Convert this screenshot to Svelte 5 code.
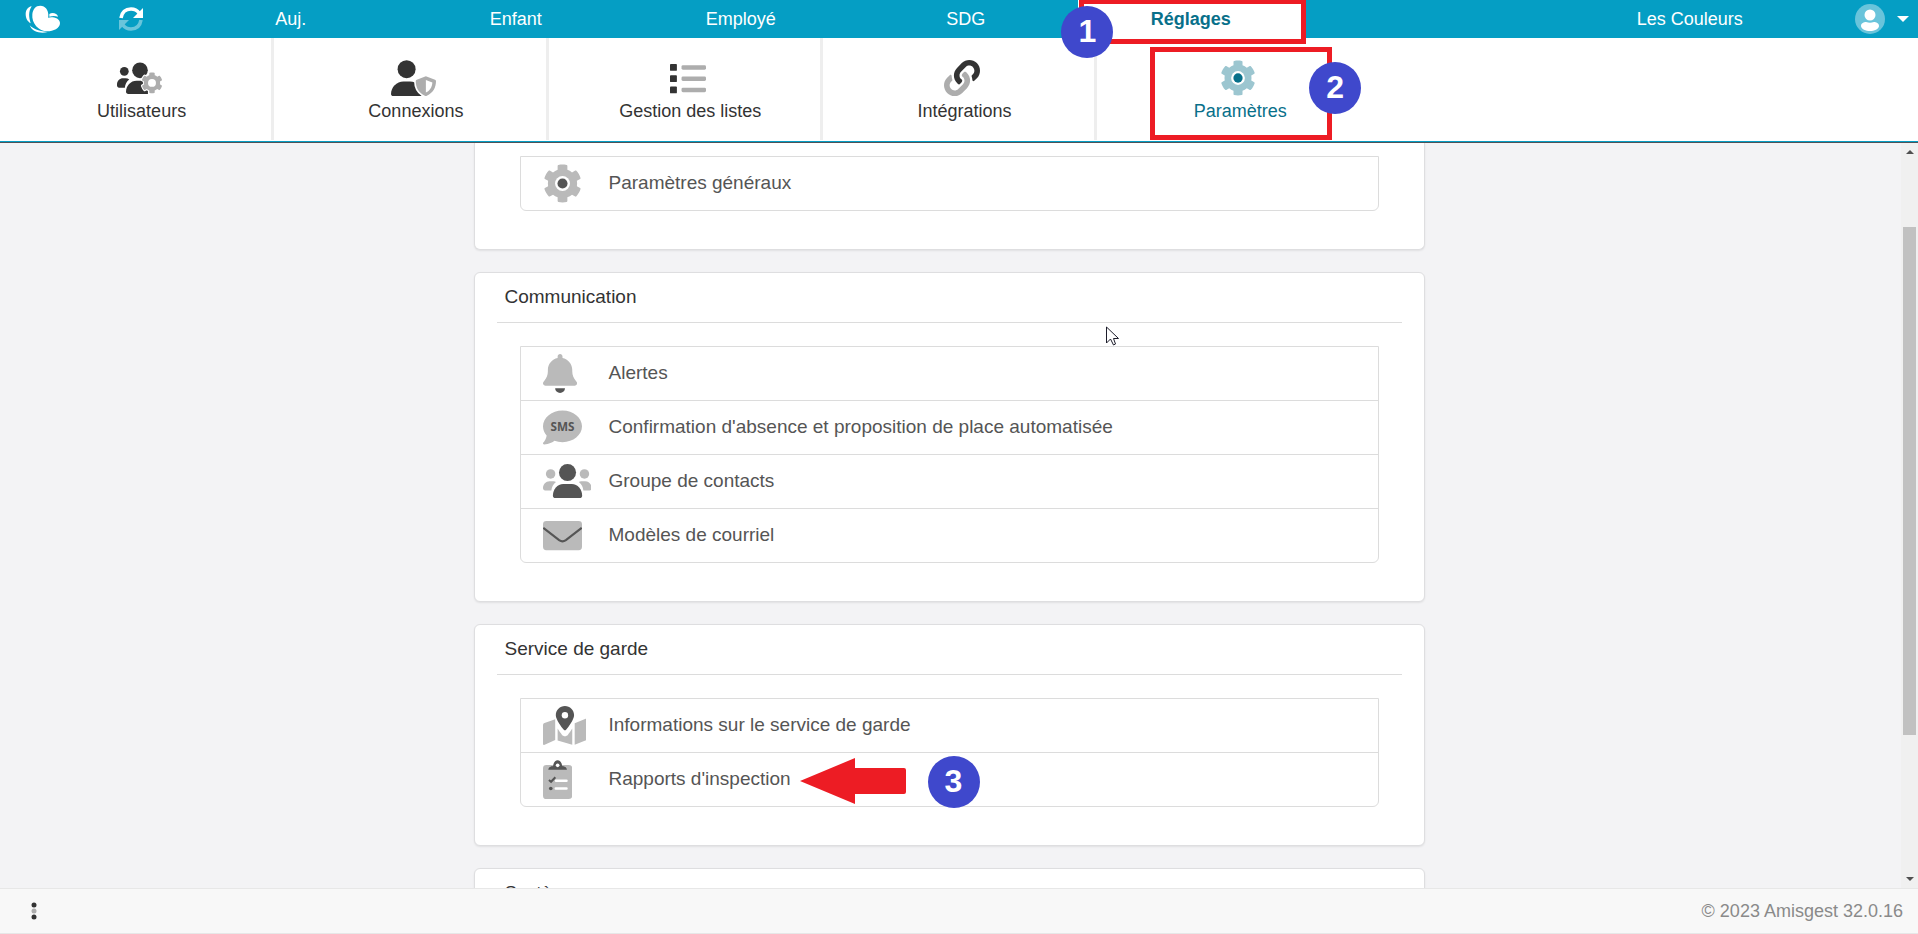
<script>
  const tabs = ["Auj.", "Enfant", "Employé", "SDG", "Réglages"];

  const tools = [
    { label: "Utilisateurs", icon: "usersCog" },
    { label: "Connexions", icon: "userShield" },
    { label: "Gestion des listes", icon: "list" },
    { label: "Intégrations", icon: "link" },
    { label: "Paramètres", icon: "gear" },
  ];

  const sections = [
    { items: [{ label: "Paramètres généraux", icon: "gear" }] },
    {
      title: "Communication",
      pointer: true,
      items: [
        { label: "Alertes", icon: "bell" },
        { label: "Confirmation d'absence et proposition de place automatisée", icon: "sms" },
        { label: "Groupe de contacts", icon: "group" },
        { label: "Modèles de courriel", icon: "envelope" },
      ],
    },
    {
      title: "Service de garde",
      items: [
        { label: "Informations sur le service de garde", icon: "map" },
        { label: "Rapports d'inspection", icon: "clipboard", step: 3 },
      ],
    },
    { title: "Système", items: [] },
  ];

  const widths = {
    usersCog: 640,
    userShield: 640,
    list: 512,
    link: 512,
    gear: 512,
    bell: 448,
    sms: 512,
    group: 640,
    envelope: 512,
    map: 576,
    clipboard: 384,
  };

  const gearPath =
    "M487.4 315.7l-42.6-24.6c4.3-23.2 4.3-47 0-70.2l42.6-24.6c4.9-2.8 7.1-8.6 5.5-14-11.1-35.6-30-67.8-54.7-94.6-3.8-4.1-10-5.1-14.8-2.3L380.8 110c-17.9-15.4-38.5-27.3-60.8-35.1V25.8c0-5.6-3.9-10.5-9.4-11.7-36.7-8.2-74.3-7.8-109.2 0-5.5 1.2-9.4 6.1-9.4 11.7V75c-22.2 7.9-42.8 19.8-60.8 35.1L88.7 85.5c-4.9-2.8-11-1.9-14.8 2.3-24.7 26.7-43.6 58.9-54.7 94.6-1.7 5.4.6 11.2 5.5 14L67.3 221c-4.3 23.2-4.3 47 0 70.2l-42.6 24.6c-4.9 2.8-7.1 8.6-5.5 14 11.1 35.6 30 67.8 54.7 94.6 3.8 4.1 10 5.1 14.8 2.3l42.6-24.6c17.9 15.4 38.5 27.3 60.8 35.1v49.2c0 5.6 3.9 10.5 9.4 11.7 36.7 8.2 74.3 7.8 109.2 0 5.5-1.2 9.4-6.1 9.4-11.7v-49.2c22.2-7.9 42.8-19.8 60.8-35.1l42.6 24.6c4.9 2.8 11 1.9 14.8-2.3 24.7-26.7 43.6-58.9 54.7-94.6 1.5-5.5-.7-11.3-5.6-14.1z";
</script>

<!-- two-tone icons: .dark is the main tone, .soft the light one, .gap cuts a hole -->
{#snippet icon(name)}
  <svg class="icon" viewBox="0 0 {widths[name]} 512" aria-hidden="true">
    {#if name === "usersCog"}
      <circle class="dark" cx="104" cy="161" r="62" />
      <path class="dark" d="M0 364v-16c0-48 38-87 86-87h36c20 0 38 6 52 18-36 26-58 66-62 115H30c-17 0-30-13-30-30z" />
      <circle class="dark" cx="327" cy="147" r="111" />
      <path class="dark" d="M128 452c0-88 66-158 150-158h92c30 0 60 10 70 30v160H160c-18 0-32-14-32-32z" />
      <g transform="translate(344 172) scale(.6)">
        <path class="gap wide" d={gearPath} />
        <path class="soft" d={gearPath} />
        <circle class="gap" cx="256" cy="256" r="94" />
      </g>
    {:else if name === "userShield"}
      <circle class="dark" cx="222" cy="130" r="128" />
      <path class="dark" d="M0 482C0 384 80 304 178 304h92c98 0 178 80 178 178 0 17-13 30-30 30H30c-17 0-30-13-30-30z" />
      <path class="gap wide" d="M496 230l130 50c8 3 14 10 14 20 0 90-40 170-130 208q-14 6-28 0c-90-38-130-118-130-208 0-10 6-17 14-20z" />
      <path class="soft" d="M496 230l130 50c8 3 14 10 14 20 0 90-40 170-130 208q-14 6-28 0c-90-38-130-118-130-208 0-10 6-17 14-20z" />
      <path class="gap" d="M496 284l92 37c-3 60-30 114-92 142z" />
    {:else if name === "list"}
      {#each [56, 216, 376] as y}
        <rect class="dark" x="0" {y} width="98" height="98" rx="12" />
        <rect class="soft" x="164" y={y + 17} width="348" height="64" rx="20" />
      {/each}
    {:else if name === "link"}
      <path class="soft" d="M326.6 185.4c59.7 59.8 58.9 155.7.4 214.6l-67.6 67.6c-59.3 59.3-155.7 59.3-215 0-59.2-59.3-59.2-155.7 0-215l37.1-37.1c9.9-9.8 26.8-3.3 27.3 10.6.7 17.7 3.8 35.5 9.7 52.7 2 5.9.6 12.3-3.8 16.7l-13 13c-28.1 28.1-29 73.7-1.2 102 28 28.6 74.1 28.8 102.3.5l67.2-67.1c28.2-28.2 28.1-73.8 0-101.9-3.7-3.7-7.4-6.5-10.3-8.5a16 16 0 0 1-7-12.6c-.4-10.6 3.4-21.5 11.7-29.8l21.1-21.1c5.5-5.5 14.2-6.2 20.6-1.7a152 152 0 0 1 20.5 17.1z" />
      <path class="dark" d="M467.5 44.4c-59.2-59.2-155.6-59.2-214.9 0L185 112c-58.6 58.9-59.4 154.8.4 214.6a152 152 0 0 0 20.5 17.2c6.4 4.5 15.1 3.8 20.6-1.7l21-21.1c8.4-8.3 12.1-19.2 11.7-29.8a16 16 0 0 0-6.9-12.6c-2.9-2-6.6-4.9-10.3-8.5-28.1-28.1-28.2-73.7 0-101.9l67.2-67.2c28.2-28.2 74.3-28 102.3.6 27.8 28.3 26.9 73.9-1.1 101.9l-13.1 13.1c-4.4 4.3-5.8 10.8-3.8 16.6 5.9 17.2 9 35 9.7 52.7.5 13.9 17.4 20.5 27.3 10.6l37.1-37.1c59.2-59.2 59.2-155.7-.1-215z" />
    {:else if name === "gear"}
      <path class="soft" d={gearPath} />
      <circle class="gap" cx="256" cy="256" r="98" />
      <circle class="dark" cx="256" cy="256" r="66" />
    {:else if name === "bell"}
      <path class="soft" d="M224 0c-17.7 0-32 14.3-32 32v19.2C119 66 64 130.6 64 208v18.8c0 47-17.3 92.4-48.5 127.6l-7.4 8.3c-8.4 9.4-10.4 22.9-5.3 34.4S19.4 416 32 416h384c12.6 0 24-7.4 29.2-18.9s3.1-25-5.3-34.4l-7.4-8.3C401.3 319.2 384 273.9 384 226.8V208c0-77.4-55-142-128-156.8V32c0-17.7-14.3-32-32-32z" />
      <path class="dark" d="M288 448c0 17-6.7 33.3-18.7 45.3S241 512 224 512s-33.3-6.7-45.3-18.7S160 465 160 448z" />
    {:else if name === "sms"}
      <path class="soft" d="M256 448c141.4 0 256-93.1 256-208S397.4 32 256 32 0 125.1 0 240c0 45.1 17.7 86.8 47.7 120.9-1.9 24.5-11.4 46.3-21.4 62.9-7 11-13 19-21.7 28.9-4.6 4.6-5.9 11.4-3.4 17.4S9.5 480 16 480c28.7 0 57.6-8.9 81.6-19.3 22.9-10 42.4-21.9 54.3-30.6 31.8 11.5 67 17.9 104.1 17.9z" />
      <text class="dark" x="256" y="298" text-anchor="middle">SMS</text>
    {:else if name === "group"}
      <circle class="soft" cx="100" cy="157" r="62" />
      <circle class="soft" cx="544" cy="157" r="62" />
      <path class="soft" d="M0 346c0-52 38-92 86-92h52c12 0 22 2 32 8-36 28-56 66-60 112H28c-16 0-28-12-28-28z" />
      <path class="soft" d="M640 346c0-52-38-92-86-92h-52c-12 0-22 2-32 8 36 28 56 66 60 112h82c16 0 28-12 28-28z" />
      <circle class="dark" cx="322" cy="138" r="112" />
      <path class="dark" d="M130 442c0-86 58-154 136-154h112c78 0 136 68 136 154 0 18-14 32-32 32H162c-18 0-32-14-32-32z" />
    {:else if name === "envelope"}
      <rect class="soft" x="0" y="66" width="512" height="382" rx="44" />
      <path class="line" d="M4 156L212 316q44 32 88 0L508 156" />
    {:else if name === "map"}
      <path class="soft" d="M0 254c0-14 8-26 20-30l140-50v272L22 510c-12 4-22-2-22-16z" />
      <path class="soft" d="M416 228l136-58c12-5 24 2 24 16v240c0 12-8 24-20 28L416 510z" />
      <path class="soft" d="M192 296c20 32 40 60 56 80 20 26 60 26 80 0 16-20 36-48 56-80v214l-192-56z" />
      <path class="dark" d="M408 120c0 54.6-73.1 151.9-105.2 192-7.7 9.6-22 9.6-29.6 0C241.1 271.9 168 174.6 168 120 168 53.7 221.7 0 288 0s120 53.7 120 120z" />
      <circle class="gap" cx="288" cy="122" r="42" />
    {:else if name === "clipboard"}
      <rect class="soft" x="0" y="64" width="384" height="448" rx="44" />
      <path class="dark" d="M70 128c0-34 34-46 62-50C138 34 160 2 192 2s54 32 60 76c28 4 62 16 62 50z" />
      <circle class="gap" cx="192" cy="70" r="24" />
      <path class="check" d="M78 262l28 24 56-60" />
      <path class="bar" d="M172 272h136M168 374h140" />
      <circle class="dark" cx="102" cy="374" r="24" />
    {/if}
  </svg>
{/snippet}

<div class="app">
  <header class="topbar">
    <div class="brand">
      <a href="#accueil" aria-label="Accueil">
        <svg class="logo" viewBox="75 15 108 84" aria-hidden="true">
          <path d="M97 42c2-15 10-25 24-25 15 0 24 13 24 28 0 4 0 6-1 8 10-4 36-1 36 16 0 16-20 25-38 25-26 0-48-24-45-52z" />
          <path d="M95 19c-12 2-18 12-18 23 0 15 7 23 15 28-5-18-8-33 3-51z" />
          <path d="M148 42c9-6 24-2 26 8-8-3-17-3-26 0z" />
          <path d="M89 76c10 10 24 17 54 20-18 5-46 2-54-20z" />
        </svg>
      </a>
      <button aria-label="Actualiser">
        <svg class="refresh" viewBox="0 0 24 24" aria-hidden="true">
          <path class="arc" d="M2 11C3 5 7 2 12 2c4 0 6 1 8 4" />
          <path class="head" d="M24 1v10h-10z" />
          <g class="faded">
            <path class="arc" d="M22 13c-1 6-5 9-10 9-4 0-6-1-8-4" />
            <path class="head" d="M0 23V13h10z" />
          </g>
        </svg>
      </button>
    </div>
    <nav class="tabs">
      {#each tabs as tab}
        <a href="#{tab}" class="tab" class:current={tab === "Réglages"}>
          {tab}
          {#if tab === "Réglages"}
            <span class="frame frame-tab"></span>
            <span class="step step-tab">1</span>
          {/if}
        </a>
      {/each}
    </nav>
    <a class="company" href="#garderie">Les Couleurs</a>
    <button class="account" aria-label="Compte">
      <svg width="30" height="30" viewBox="0 0 30 30" aria-hidden="true">
        <circle cx="15" cy="15" r="15" fill="#69c4db" />
        <circle cx="15" cy="11" r="5.5" fill="#fff" />
        <path d="M6 22c0-3 3-4 5-4 3 1 5 1 8 0 2 0 5 1 5 4s-5 5-9 5-9-2-9-5z" fill="#fff" />
      </svg>
      <svg width="12" height="6" viewBox="0 0 12 6" aria-hidden="true">
        <path d="M0 0h12L6 6z" fill="#fff" />
      </svg>
    </button>
  </header>

  <nav class="tools">
    {#each tools as tool}
      <a href="#{tool.icon}" class="tool" class:current={tool.label === "Paramètres"}>
        {@render icon(tool.icon)}
        <span>{tool.label}</span>
        {#if tool.label === "Paramètres"}
          <span class="frame frame-tool"></span>
          <span class="step step-tool">2</span>
        {/if}
      </a>
    {/each}
  </nav>

  <div class="body">
    <main>
      {#each sections as section}
        <section class="card" class:untitled={!section.title}>
          {#if section.title}
            <h2>{section.title}</h2>
          {/if}
          {#if section.items.length}
            <ul>
              {#each section.items as item}
                <li>
                  <a href="#{item.icon}">
                    <span class="slot">{@render icon(item.icon)}</span>
                    <span class="label">{item.label}</span>
                  </a>
                  {#if item.step}
                    <svg class="arrow" width="106" height="46" viewBox="0 0 106 46" aria-hidden="true">
                      <path d="M0 23L55 0v10h49q2 0 2 2v22q0 2-2 2H55v10z" fill="#ed1c24" />
                    </svg>
                    <span class="step step-row">{item.step}</span>
                  {/if}
                </li>
              {/each}
            </ul>
          {/if}
          {#if section.pointer}
            <svg class="pointer" width="13" height="20" viewBox="0 0 13 20" aria-hidden="true">
              <path d="M.5 1v16l4-4 3 6 2-1-2-5.5h5z" fill="#fff" stroke="#1d1d2b" />
            </svg>
          {/if}
        </section>
      {/each}
    </main>
    <div class="scrollbar" aria-hidden="true">
      <svg width="8" height="4" viewBox="0 0 8 4"><path d="M0 4h8L4 0z" fill="#505050" /></svg>
      <div class="track"><div class="thumb"></div></div>
      <svg width="8" height="4" viewBox="0 0 8 4"><path d="M0 0h8L4 4z" fill="#505050" /></svg>
    </div>
  </div>

  <footer>
    <button aria-label="Menu">
      <svg width="6" height="18" viewBox="0 0 6 18" aria-hidden="true">
        <circle cx="3" cy="3" r="2.5" fill="#333" />
        <circle cx="3" cy="9" r="2.5" fill="#adadad" />
        <circle cx="3" cy="15" r="2.5" fill="#333" />
      </svg>
    </button>
    <span>© 2023 Amisgest 32.0.16</span>
  </footer>
</div>

<style>
  :global(body) {
    margin: 0;
  }

  .app {
    display: flex;
    flex-direction: column;
    height: 100vh;
    overflow: hidden;
    font-family: "Liberation Sans", Arial, sans-serif;
    font-size: 18px;
    color: #333;
    background: #f3f3f5;
  }

  a {
    color: inherit;
    text-decoration: none;
  }

  button {
    padding: 0;
    border: 0;
    background: none;
    cursor: pointer;
  }

  svg {
    display: block;
  }

  /* top bar */

  .topbar {
    display: flex;
    flex: none;
    height: 38px;
    line-height: 38px;
    color: #fff;
    background: #059ec4;
  }

  .brand {
    display: flex;
    align-items: center;
    gap: 58px;
    box-sizing: border-box;
    width: 9.3%;
    padding-left: 25px;
  }

  .logo {
    width: 36px;
    height: 28px;
    fill: #fff;
  }

  .refresh {
    width: 24px;
    height: 24px;
  }

  .arc {
    fill: none;
    stroke: #fff;
    stroke-width: 3.6;
  }

  .head {
    fill: #fff;
  }

  .faded {
    opacity: 0.4;
  }

  .tabs {
    display: flex;
    width: 58.65%;
  }

  .tab {
    position: relative;
    flex: 1;
    text-align: center;
  }

  .tab.current {
    z-index: 2;
    font-weight: bold;
    color: #08708a;
    background: #fff;
  }

  .company {
    width: 11.7%;
    margin-left: auto;
    text-align: center;
  }

  .account {
    display: flex;
    align-items: center;
    justify-content: flex-end;
    gap: 12px;
    box-sizing: border-box;
    width: 116px;
    padding-right: 9px;
  }

  /* second level */

  .tools {
    display: flex;
    flex: none;
    height: 104px;
    background: #fff;
    border-bottom: 1px solid #4d5358;
    box-shadow: inset 0 -1px #059ec4;
  }

  .tool {
    position: relative;
    display: flex;
    flex-direction: column;
    align-items: center;
    gap: 4px;
    box-sizing: border-box;
    width: 14.3%;
    height: 102px;
    padding: 22px 0 0 12px;
    line-height: 22px;
    border-right: 3px solid #eee;
  }

  .tool.current {
    color: #08708a;
    border-right: 0;
  }

  .tool .icon {
    height: 36px;
    margin-right: 5px;
  }

  .dark {
    fill: #333;
  }

  .soft {
    fill: #adadad;
  }

  .gap {
    fill: #fff;
  }

  .wide {
    stroke: #fff;
    stroke-width: 48;
  }

  .current .dark {
    fill: #08708a;
  }

  .current .soft {
    fill: #9cc6d0;
  }

  /* content */

  .body {
    display: flex;
    flex: 1;
    min-height: 0;
  }

  main {
    display: flex;
    flex: 1;
    flex-direction: column;
    gap: 22px;
    overflow: hidden;
    padding: 0 calc(25% - 3px) 0 calc(25% - 6px);
  }

  .card {
    position: relative;
    flex: none;
    padding: 0 22px 38px;
    background: #fff;
    border: 1px solid #dedee0;
    border-radius: 6px;
    box-shadow: 0 1px 2px rgba(0, 0, 0, 0.08);
  }

  .card.untitled {
    padding-top: 13px;
    border-top: 0;
    border-radius: 0 0 6px 6px;
  }

  h2 {
    margin: 0 0 23px;
    padding: 0 8px 2px;
    font-size: 19px;
    font-weight: normal;
    line-height: 47px;
    border-bottom: 1px solid #dcdcdc;
  }

  ul {
    margin: 0 23px;
    padding: 0;
    list-style: none;
    border: 1px solid #dcdcdc;
    border-radius: 0 0 6px 6px;
  }

  li {
    position: relative;
  }

  li + li {
    border-top: 1px solid #dcdcdc;
  }

  li a {
    display: flex;
    align-items: center;
    height: 53px;
    padding-left: 22px;
    font-size: 19px;
    color: #555;
  }

  .slot {
    width: 66px;
  }

  .slot .icon {
    height: 39px;
  }

  .slot .dark {
    fill: #555;
  }

  .slot .soft {
    fill: #bababa;
  }

  .slot text {
    font-family: "Open Sans", sans-serif;
    font-size: 154px;
    font-weight: bold;
  }

  .label {
    padding-bottom: 2px;
  }

  .line {
    fill: none;
    stroke: #555;
    stroke-width: 28;
  }

  .check {
    fill: none;
    stroke: #555;
    stroke-width: 26;
  }

  .bar {
    fill: none;
    stroke: #fff;
    stroke-width: 34;
    stroke-linecap: round;
  }

  /* guide marks laid over the page */

  .frame {
    position: absolute;
    box-sizing: border-box;
    border: 5px solid #ed1c24;
  }

  .frame-tab {
    top: -1px;
    left: 1px;
    width: 227px;
    height: 45px;
  }

  .frame-tool {
    top: 9px;
    left: 53px;
    width: 182px;
    height: 93px;
  }

  .step {
    position: absolute;
    box-sizing: border-box;
    width: 52px;
    height: 52px;
    font-size: 32px;
    font-weight: bold;
    line-height: 50px;
    text-align: center;
    color: #fff;
    background: #3f48cc;
    border-radius: 50%;
  }

  .step-tab {
    top: 6px;
    left: -17px;
  }

  .step-tool {
    top: 24px;
    left: 212px;
  }

  .step-row {
    top: 3px;
    left: 407px;
  }

  .arrow {
    position: absolute;
    top: 5px;
    left: 279px;
  }

  .pointer {
    position: absolute;
    top: 53px;
    left: 631px;
  }

  /* scrollbar */

  .scrollbar {
    display: flex;
    flex-direction: column;
    align-items: center;
    gap: 6px;
    width: 17px;
    padding: 7px 0;
    box-sizing: border-box;
    background: #f0f0f0;
  }

  .track {
    display: grid;
    flex: 1;
    grid-template-rows: 67fr 508fr 136fr;
    width: 13px;
  }

  .thumb {
    grid-row: 2;
    background: #c1c1c1;
  }

  footer {
    display: flex;
    flex: none;
    align-items: center;
    justify-content: space-between;
    height: 44px;
    padding: 0 15px 0 31px;
    color: #8a8a8a;
    background: #f8f8f8;
    border: solid #e7e7e7;
    border-width: 1px 0;
  }
</style>
